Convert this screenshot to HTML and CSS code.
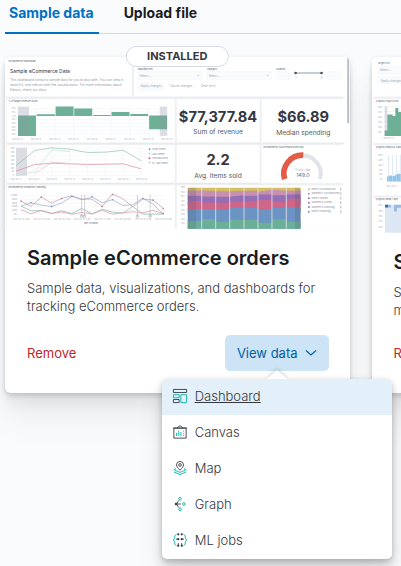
FILE: index.html
```html
<!DOCTYPE html>
<html lang="en">
<head>
<meta charset="utf-8">
<meta name="viewport" content="width=device-width, initial-scale=1">
<title>Sample data</title>
<link rel="stylesheet" href="styles.css">
</head>
<body>
<main class="page">
  <nav class="tabs" aria-label="Data sources">
    <a class="tab tab-active" href="#sample" aria-current="page">Sample data</a>
    <a class="tab" href="#upload">Upload file</a>
  </nav>
  <div class="cards">
    <article class="card">
      <span class="badge">INSTALLED</span>
      <svg class="thumb" viewBox="15 171 1035 516" role="img" aria-label="eCommerce dashboard preview">
        <path fill="#fff" d="M15 171h1035v516H15z"/>
        <path fill="#eff0f3" d="M19 290h1012v397H19zM395 178h8v114h-8z"/>
        <path fill="#e4e6ea" d="M21 290h375v3H21zM403 290h632v3H403zM21 428h504v3H21zM531 428h249v3H531zM786 428h249v3H786zM21 549h504v3H21zM531 549h249v3H531z"/>
        <g fill="#fff">
          <path d="M21 180h375v110H21zM403 180h632v110H403zM21 298h504v130H21zM531 298h249v130H531zM786 298h249v130H786zM21 436h504v113H21zM531 436h249v113H531zM786 436h249v113H786zM21 557h504v130H21zM531 557h504v130H531z"/>
        </g>
        <path fill="#bcbfc5" d="M1043 174h6v196h-6z"/>
        <g class="tiny">
          <text x="25" y="187">[eCommerce] Markdown</text>
          <text x="25" y="307">% of target revenue ($10k)</text>
          <text x="25" y="565">[eCommerce] Promotion Tracking</text>
          <text x="791" y="445">[eCommerce] Sold Products per Day</text>
          <text x="414" y="209">Manufacturer</text>
          <text x="622" y="209">Category</text>
          <text x="830" y="209">Quantity</text>
        </g>
        <text class="md-title" x="30" y="218">Sample eCommerce Data</text>
        <g class="md">
          <text x="30" y="243">This dashboard contains sample data for you to play with. You can view it,</text>
          <text x="30" y="258">search it, and interact with the visualizations. For more information about</text>
          <text x="30" y="273">Kibana, check our docs.</text>
        </g>
        <g fill="#fafbfd" stroke="#edf0f5" stroke-width="1">
          <rect x="414" y="215" width="194" height="24" rx="3"/>
          <rect x="622" y="215" width="194" height="24" rx="3"/>
          <rect x="830" y="215" width="39" height="24" rx="3"/>
          <rect x="984" y="215" width="40" height="24" rx="3"/>
          <rect x="414" y="247" width="77" height="24" rx="3"/>
        </g>
        <path d="M592 224l4 4 4-4M800 224l4 4 4-4" fill="none" stroke="#aab0bb" stroke-width="1.5"/>
        <path d="M888 219h78" stroke="#b5bccb" stroke-width="4"/>
        <circle cx="888" cy="219" r="4" fill="#4c5160"/><circle cx="966" cy="219" r="4" fill="#4c5160"/>
        <g class="faint">
          <text x="419" y="230">Select...</text><text x="627" y="230">Select...</text>
          <text x="422" y="261">Apply changes</text><text x="510" y="261">Cancel changes</text><text x="602" y="261">Clear form</text>
          <text x="887" y="238">1</text><text x="963" y="238">4</text>
        </g>
        <!-- target revenue -->
        <g transform="translate(0 150)">
          <path d="M50 177h455M50 187h455M50 209h455M50 219h455M50 230h455M50 241h455M50 252h455M110 168v90M166 168v90M222 168v90M279 168v90M334 168v90M391 168v90M447 168v90" stroke="#eef0f4" stroke-width="1.5"/>
          <path fill="#6db096" d="M54 197h54v61H54zM110 193h55v5h-55zM167 170h54v28h-54zM223 176h54v22h-54zM280 195h53v3h-53zM335 186h54v12h-54zM392 192h53v6h-53zM448 197h54v41h-54z"/>
          <path fill="#9295a5" fill-opacity=".3" d="M54 170h33v88H54zM480 170h22v88h-22z"/>
          <g class="axis">
            <text x="35" y="178">20%</text><text x="35" y="189">10%</text><text x="38" y="200">0%</text><text x="33" y="211">-10%</text><text x="33" y="222">-20%</text><text x="33" y="233">-30%</text><text x="33" y="244">-40%</text><text x="33" y="255">-50%</text>
            <text x="36" y="269">2021-07-12</text><text x="92" y="269">2021-07-13</text><text x="148" y="269">2021-07-14</text><text x="204" y="269">2021-07-15</text><text x="260" y="269">2021-07-16</text><text x="316" y="269">2021-07-17</text><text x="372" y="269">2021-07-18</text><text x="428" y="269">2021-07-19</text><text x="484" y="269">2021-07-20</text>
          </g>
        </g>
        <g class="metric">
          <text class="metric-value" x="655" y="367">$77,377.84</text>
          <text class="metric-label" x="655" y="403">Sum of revenue</text>
          <text class="metric-value" x="911" y="366">$66.89</text>
          <text class="metric-label" x="911" y="406">Median spending</text>
          <text class="metric-value" x="655" y="495">2.2</text>
          <text class="metric-label" x="655" y="536">Avg. items sold</text>
        </g>
        <!-- line charts -->
        <g transform="translate(0 420)" fill="none" stroke-width="2">
          <path d="M48 24h376M48 36h376M48 48h376M48 60h376M48 72h376M48 84h376M48 96h376M48 107h376M102 22v86M155 22v86M209 22v86M263 22v86M316 22v86M370 22v86M424 22v86M60 168h432M60 179h432M60 190h432M60 201h432M60 212h432M60 223h432" stroke="#f0f1f4" stroke-width="1.5"/>
          <path fill="#dcdde2" d="M48 24h33v84H48z"/>
          <path d="M48 78l56-46 52-8 54 4 53 10 53-1 54-6 54 32" stroke="#88c3ac"/>
          <path d="M48 107l56-11 52-66 54 5" stroke="#c0dfd3"/>
          <path d="M48 94l56-20 52-4 54 2 53 2 53-1 54-1 54 15" stroke="#dc829d"/>
          <path d="M104 102l52-35 54 4" stroke="#edbdca"/>
          <path d="M63 199l30-10 31 7 31 4 30-10 31-20 30 10 31-8 30 17 31-9 31 17 30-2 30-20 31 18 31 31" stroke="#91a8d6"/>
          <path d="M63 184l30 16 31-28 31 18 30-14 31-8 30 10 31 0 30 22 31-37 31 14 30 24 30-23 31 3 31 25" stroke="#c391ab"/>
          <path d="M63 199l30 14 31 0 31 8 30-8 31 8 30-15 31 17 30-15 31 9 31 3 30-20 30 23h62" stroke="#80b79f"/>
          <path d="M63 210l30 12 31-10 31 9 30-4 31 6 30-5 31 4 30-10 31 11 31-4 30-3 30 3 31-7 31 10" stroke="#d88da4"/>
          <path d="M245 165v65M254 165v65M413 165v65M451 165v65" stroke="#a8acb5" stroke-width="1.5"/>
          <g stroke="#898e99" stroke-width="1.5"><circle cx="245" cy="229" r="4"/><circle cx="254" cy="229" r="4"/><circle cx="413" cy="229" r="4"/><circle cx="451" cy="229" r="4"/></g>
          <g stroke="none">
            <g fill="#7392c5"><circle cx="93" cy="189" r="2.5"/><circle cx="155" cy="200" r="2.5"/><circle cx="216" cy="170" r="2.5"/><circle cx="277" cy="170" r="2.5"/><circle cx="338" cy="180" r="2.5"/><circle cx="429" cy="176" r="2.5"/><circle cx="490" cy="221" r="2.5"/></g>
            <g fill="#bd7596"><circle cx="63" cy="184" r="2.5"/><circle cx="124" cy="172" r="2.5"/><circle cx="185" cy="176" r="2.5"/><circle cx="307" cy="200" r="2.5"/><circle cx="338" cy="164" r="2.5"/><circle cx="460" cy="181" r="2.5"/><circle cx="490" cy="207" r="2.5"/></g>
            <circle cx="449" cy="28" r="3" fill="#63b294"/><circle cx="449" cy="41" r="3" fill="#b7dccd"/><circle cx="449" cy="55" r="3" fill="#d36086"/><circle cx="449" cy="68" r="3" fill="#ecb5c5"/>
            <g class="legend"><text x="456" y="31">Total items</text><text x="456" y="44">Last week</text><text x="456" y="58">Transactions</text><text x="456" y="71">Tx. last week</text></g>
            <g class="axis">
              <text x="32" y="26">350</text><text x="32" y="38">300</text><text x="32" y="50">250</text><text x="32" y="62">200</text><text x="32" y="74">150</text><text x="32" y="86">100</text><text x="35" y="98">50</text><text x="38" y="109">0</text>
              <text x="32" y="120">2021-07-12</text><text x="86" y="120">2021-07-13</text><text x="139" y="120">2021-07-14</text><text x="193" y="120">2021-07-15</text><text x="247" y="120">2021-07-16</text><text x="300" y="120">2021-07-17</text><text x="354" y="120">2021-07-18</text><text x="408" y="120">2021-07-20</text>
              <text x="33" y="170">$1,000</text><text x="36" y="181">$800</text><text x="36" y="192">$600</text><text x="36" y="203">$400</text><text x="36" y="214">$200</text><text x="42" y="225">$0</text>
              <text x="39" y="240">2021-07-13 12:00</text><text x="100" y="240">2021-07-14 12:00</text><text x="161" y="240">2021-07-15 12:00</text><text x="222" y="240">2021-07-16 12:00</text><text x="283" y="240">2021-07-17 12:00</text><text x="344" y="240">2021-07-18 12:00</text><text x="405" y="240">2021-07-19 12:00</text><text x="466" y="240">2021-07-20 12:00</text>
            </g>
            <g class="tiny"><text x="253" y="252">per 12 hours</text></g>
          </g>
        </g>
        <!-- gauge and stacked areas -->
        <g transform="translate(510 420)">
          <path d="M346 118A55 55 0 1 1 451 118" fill="none" stroke="#e1e3e8" stroke-width="12"/>
          <path d="M345 118A56 56 0 0 1 401 46" fill="none" stroke="#e35c48" stroke-width="17"/>
          <g class="gauge"><text class="gauge-label" x="400" y="93">Trxns / day</text><text x="400" y="112">149.0</text></g>
          <path fill="#d6bf62" d="M54 144h339v20H54z"/>
          <path fill="#c78fb0" d="M54 152h42v-1l42 3h42l43-1h42v3l42-6 43 3 43-1v30H54z"/>
          <path fill="#946fb5" d="M54 168h42v2h42v1h42l43-5v2h42v-4h42v2h42v-2h44v34H54z"/>
          <path fill="#cd6688" d="M54 184h42v4h42v1h42v-3h43v-1h42v-5h42v6h43v-9h43v40H54z"/>
          <path fill="#6b93c3" d="M54 208h84v1h42v-5h43l42 1v3h42v-3h43v-2h43v64H54z"/>
          <path fill="#6ab096" d="M54 244h42v-6h42v8h42v-6h85v9h42v-10h43v6h43v22H54z"/>
          <path d="M96 144v123M138 144v123M180 144v123M223 144v123M265 144v123M307 144v123M350 144v123" stroke="#e4e5ea" stroke-width="2.5"/>
          <path fill="#50545f" fill-opacity=".2" d="M54 144h25v123H54zM376 144h17v123h-17z"/>
          <g class="axis"><text x="32" y="145">100%</text><text x="34" y="159">90%</text><text x="34" y="172">80%</text><text x="34" y="186">70%</text><text x="34" y="200">60%</text><text x="34" y="213">50%</text><text x="34" y="227">40%</text><text x="34" y="241">30%</text><text x="34" y="254">20%</text></g>
          <circle cx="418" cy="148" r="3" fill="#d6bf57"/><circle cx="418" cy="162" r="3" fill="#ca8eae"/><circle cx="418" cy="175" r="3" fill="#9170b8"/><circle cx="418" cy="189" r="3" fill="#d36086"/><circle cx="418" cy="202" r="3" fill="#6092c0"/><circle cx="418" cy="216" r="3" fill="#54b399"/>
          <g class="legend"><text x="426" y="151">Men's Accessories</text><text x="426" y="164">Women's Accessories</text><text x="426" y="178">Men's Shoes</text><text x="426" y="191">Women's Shoes</text><text x="426" y="205">Women's Clothing</text><text x="426" y="218">Men's Clothing</text></g>
          <path d="M514 144v76" stroke="#8c919b" stroke-width="2" stroke-dasharray="8 5.5"/>
        </g>
      </svg>
      <div class="card-body">
        <h2 class="card-title">Sample eCommerce orders</h2>
        <p class="card-text">Sample data, visualizations, and dashboards for tracking eCommerce orders.</p>
        <div class="card-footer">
          <button class="remove" type="button">Remove</button>
          <div class="view">
            <button class="view-button" type="button" aria-haspopup="menu" aria-expanded="true">View data
              <svg class="chevron" viewBox="0 0 12 8" aria-hidden="true"><path d="M1 1.5l5 4.5 5-4.5"/></svg>
            </button>
            <div class="menu">
              <a class="menu-item menu-item-active" href="#dashboard">
                <svg class="icon" viewBox="0 0 32 32" aria-hidden="true"><path class="ink" d="M1 1h30v7H1zM1 24h13v7H1z"/><path class="teal" d="M1 13h13v7H1zM18 13h13v18H18z"/></svg>
                <span>Dashboard</span></a>
              <a class="menu-item" href="#canvas">
                <svg class="icon" viewBox="0 0 32 32" aria-hidden="true"><path class="ink" d="M2 7v23h28V7zM0 7h32M9 7l3-3a5 5 0 0 1 8 0l3 3"/><path class="teal" d="M8 18v7M13 13v12M18 16v9M24 13v2M24 18v2M24 23v2"/></svg>
                <span>Canvas</span></a>
              <a class="menu-item" href="#map">
                <svg class="icon" viewBox="0 0 32 32" aria-hidden="true"><path class="ink" d="M16 21C11 16 8 12 8 9a8 8 0 0 1 16 0c0 3-3 7-8 12z"/><circle class="ink" cx="16" cy="9" r="3"/><path class="teal" d="M7 17l-5 3 14 6 14-6-5-3M2 25l14 6 14-6"/></svg>
                <span>Map</span></a>
              <a class="menu-item" href="#graph">
                <svg class="icon" viewBox="0 0 32 32" aria-hidden="true"><path class="ink" d="M8 16h10M8 16l5-8M8 16l5 8"/><circle class="ink-fill" cx="7" cy="16" r="3"/><circle class="teal" cx="16" cy="4" r="3"/><circle class="teal" cx="25" cy="16" r="3"/><circle class="teal" cx="16" cy="28" r="3"/></svg>
                <span>Graph</span></a>
              <a class="menu-item" href="#ml">
                <svg class="icon" viewBox="0 0 32 32" aria-hidden="true"><path class="teal" d="M8 3L4 6v5l-3 5 3 5v5l4 3M24 3l4 3v5l3 5-3 5v5l-4 3"/><path class="ink" d="M12 23v4M20 23v4M7 14h4M21 14h4"/><g class="ink-fill"><circle cx="12" cy="3" r="2.5"/><circle cx="20" cy="3" r="2.5"/><circle cx="12" cy="14" r="2.5"/><circle cx="20" cy="14" r="2.5"/><circle cx="12" cy="29" r="2.5"/><circle cx="20" cy="29" r="2.5"/></g></svg>
                <span>ML jobs</span></a>
            </div>
          </div>
        </div>
      </div>
    </article>
    <article class="card">
      <svg class="thumb" viewBox="1116 171 1035 528" role="img" aria-label="Flights dashboard preview">
        <path fill="#fff" d="M1116 171h1035v528H1116z"/>
        <path fill="#eff0f3" d="M1120 290h1031v7H1120zM1120 429h1031v7H1120zM1120 587h1031v7H1120z"/>
        <g class="tiny"><text x="1134" y="191">Origin City</text><text x="1127" y="307">[Flights] Flight count</text><text x="1127" y="445">[Flights] Delays &amp; Cancellations</text><text x="1127" y="602">[Flights] Delay Type</text></g>
        <g fill="#fafbfd" stroke="#edf0f5"><path d="M1134 199h200v22h-200zM1134 231h90v21h-90z"/></g>
        <g class="faint"><text x="1139" y="213">Select...</text><text x="1142" y="245">Apply changes</text></g>
        <path d="M1152 320h100M1152 335h100M1152 350h100M1152 365h100M1152 380h100M1152 395h100" stroke="#eceef2" stroke-width="2"/>
        <path fill="#6db096" d="M1154 408v-16h8v-48h16v4h8v-24h9v12h9v8h9v64z"/>
        <path fill="#9295a5" fill-opacity=".3" d="M1154 320h8v88h-8z"/>
        <path fill="#8ec4e9" d="M1161 545v-14l10-5 10 3 12-7 13 1v22z"/>
        <path d="M1166 465v80M1178 465v80M1190 465v80M1201 465v80" stroke="#cbdced" stroke-width="2"/>
        <path fill="#dce7f3" d="M1155 615h60v84h-60z"/><path fill="#2f6cae" d="M1155 615h9v8h-9z"/><path fill="#9bb9dc" d="M1164 615h9v8h-9zM1182 615h9v20h-9zM1191 615h12v9h-12z"/>
        <g class="axis"><text x="1134" y="325">400</text><text x="1134" y="340">350</text><text x="1134" y="355">300</text><text x="1134" y="370">250</text><text x="1134" y="385">200</text><text x="1134" y="400">100</text><text x="1150" y="418">2021-07-12</text><text x="1134" y="467">100%</text><text x="1136" y="482">80%</text><text x="1136" y="497">60%</text><text x="1136" y="512">40%</text><text x="1136" y="527">20%</text><text x="1139" y="542">0%</text><text x="1160" y="562">2021-07-12</text><text x="1134" y="620">100%</text><text x="1136" y="636">90%</text><text x="1136" y="652">80%</text><text x="1136" y="668">70%</text><text x="1136" y="684">60%</text></g>
      </svg>
      <div class="card-body">
        <h2 class="card-title">Sample flight data</h2>
        <p class="card-text">Sample data, visualizations, and dashboards for monitoring flight routes.</p>
        <div class="card-footer">
          <button class="remove" type="button">Remove</button>
        </div>
      </div>
    </article>
  </div>
</main>
</body>
</html>
```
FILE: styles.css
```css
* { box-sizing: border-box; }

body {
  margin: 0;
  min-height: 100vh;
  background: #fafbfd;
  color: #343741;
  font: 13px/18px Inter, "Liberation Sans", sans-serif;
}

.page {
  padding-left: 5px;
  overflow: hidden;
  min-height: 100vh;
}

.tabs {
  display: flex;
  gap: 21px;
  box-shadow: inset 0 -1px #d3dae6;
}

.tab {
  padding: 4px 5px 12px 4px;
  color: #1a1c21;
  font-size: 14px;
  font-weight: 700;
  text-decoration: none;
}

.tab-active {
  color: #0071c2;
  box-shadow: inset 0 -2px #0071c2;
}

.cards {
  display: grid;
  grid-auto-flow: column;
  grid-auto-columns: 87%;
  gap: 22px;
  margin-top: 23px;
}

.card {
  position: relative;
  display: flex;
  flex-direction: column;
  background: #fff;
  border-radius: 6px;
  box-shadow: 0 1px 5px rgba(0, 0, 0, .1), 0 4px 4px rgba(0, 0, 0, .07), 0 12px 14px rgba(0, 0, 0, .06), 0 28px 32px rgba(0, 0, 0, .05);
}

.badge {
  position: absolute;
  top: -11px;
  left: 50%;
  transform: translateX(-50%);
  padding: 0 20px;
  border: 1px solid #d3dae6;
  border-radius: 11px;
  background: #fff;
  font-size: 11px;
  font-weight: 700;
  line-height: 19px;
}

.thumb {
  display: block;
  width: 100%;
  border-radius: 6px 6px 0 0;
}

.card-body {
  display: flex;
  flex: 1;
  flex-direction: column;
  padding: 16px 21px 22px 22px;
}

.card-title {
  margin: 0;
  color: #1a1c21;
  font-size: 20px;
  font-weight: 600;
  line-height: 26px;
}

.card-text {
  margin: 8px 0 16px;
  font-weight: 300;
}

.card-footer {
  display: flex;
  align-items: center;
  justify-content: space-between;
  min-height: 36px;
  margin-top: auto;
}

button {
  border: 0;
  font: inherit;
}

.remove {
  padding: 0;
  background: none;
  color: #bd271e;
}

.view { position: relative; }

.view-button {
  display: flex;
  align-items: center;
  gap: 7px;
  height: 36px;
  padding: 0 12px;
  border-radius: 5px;
  background: #cce4f5;
  color: #0061a6;
}

.chevron {
  width: 12px;
  height: 8px;
  fill: none;
  stroke: currentColor;
  stroke-width: 1.2;
}

.menu {
  position: absolute;
  z-index: 2;
  top: calc(100% + 8px);
  left: 50%;
  width: 230px;
  transform: translateX(-50%);
  border-radius: 5px;
  background: #fff;
  box-shadow: 0 1px 5px rgba(0, 0, 0, .12), 0 4px 6px rgba(0, 0, 0, .1), 0 8px 14px rgba(0, 0, 0, .1), 0 16px 28px rgba(0, 0, 0, .08);
}

.menu::before {
  content: "";
  position: absolute;
  bottom: 100%;
  left: 50%;
  transform: translateX(-50%);
  border: 10px solid transparent;
  border-top: 0;
  border-bottom: 9px solid #fff;
  filter: drop-shadow(0 -1px 2px rgba(0, 0, 0, .2));
}

.menu-item {
  display: flex;
  align-items: center;
  gap: 8px;
  height: 36px;
  padding: 0 11px 2px;
  color: #343741;
  font-weight: 300;
  text-decoration: none;
}

.menu-item-active {
  position: relative;
  border-radius: 5px 5px 0 0;
  background: #e3f0fa;
  text-decoration: underline;
}

.icon {
  width: 14px;
  height: 14px;
  fill: none;
  stroke-width: 2;
  overflow: visible;
}

.ink { stroke: #343741; }
.ink-fill { fill: #343741; }
.teal { stroke: #00b0a5; }

/* Dashboard preview lettering */
.tiny { fill: #6a6e78; font-size: 7px; font-weight: 500; }
.md-title { fill: #343741; font-size: 15px; font-weight: 400; }
.md { fill: #7b808b; font-size: 10px; font-weight: 300; }
.faint { fill: #a0a6b2; font-size: 9px; }
.axis { fill: #a6abb5; font-size: 6px; }
.legend { fill: #848994; font-size: 8px; }
.metric { fill: #343741; text-anchor: middle; }
.metric-value { font-size: 44px; font-weight: 700; }
.metric-label { font-size: 20px; fill: #555963; }
.gauge { fill: #69707d; font-size: 16px; text-anchor: middle; }
.gauge-label { fill: #a6abb5; font-size: 9px; }
```
